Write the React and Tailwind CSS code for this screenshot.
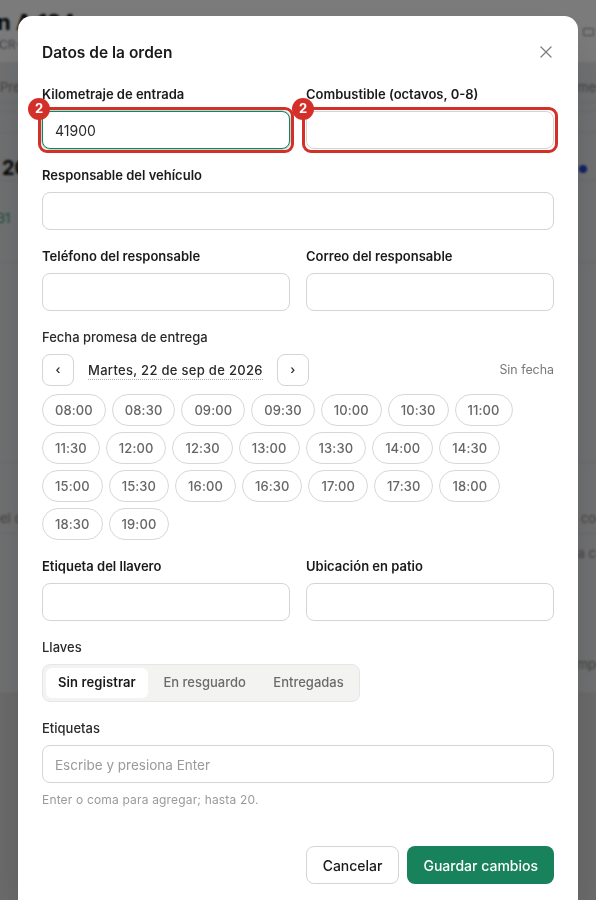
import React from 'react';
import { X } from 'lucide-react';

const slots = [
  '08:00', '08:30', '09:00', '09:30', '10:00', '10:30', '11:00',
  '11:30', '12:00', '12:30', '13:00', '13:30', '14:00', '14:30',
  '15:00', '15:30', '16:00', '16:30', '17:00', '17:30', '18:00',
  '18:30', '19:00',
];

const Field = ({ label, value, flagged, focused }) => (
  <div className="min-w-0">
    <label className="block h-5 mb-[7px] text-[13px] leading-5 font-semibold text-[#1a1a1a]">{label}</label>
    <div className="relative">
      <input
        readOnly
        value={value || ''}
        className={`block w-full h-[38px] px-[12px] pt-px rounded-lg border bg-white text-[14px] text-[#2a2a2a] outline-none ${
          focused ? 'border-[#17825c] ring-1 ring-[#17825c]/30' : 'border-[#d4d4d4]'
        }`}
      />
      {flagged && (
        <>
          <div className="absolute -inset-1 rounded-[9px] border-[3px] border-[#d3302a] pointer-events-none" />
          <div className="absolute -left-[14px] -top-[13px] w-[22px] h-[22px] rounded-full bg-[#d3302a] text-white text-[13px] font-bold flex items-center justify-center">
            2
          </div>
        </>
      )}
    </div>
  </div>
);

// page behind the dialog, only its edges show
const Page = () => (
  <div className="h-[900px] bg-[#d8d8d9] text-[13px] text-[#888] overflow-hidden">
    <div className="h-[694px] bg-[#e2e3e5]">
      <div className="h-[63px] bg-[#f6f7f9] border-b border-[#e2e2e4] flex justify-between">
        <div className="-ml-[3px] pt-[10px]">
          <div className="text-[22px] leading-[24px] font-bold text-[#111]">n A 124</div>
          <div className="mt-[3px] pl-[2px] text-[12px] leading-[16px]">CR-</div>
        </div>
        <div className="w-[11px] h-[8px] mt-[28px] mr-[2px] border border-[#888] rounded-[1px]" />
      </div>
      <div className="h-[40px] border-b border-[#d4d4d6] flex justify-between items-center pt-[10px]">
        <span>Pre</span>
        <span>me</span>
      </div>
      <div className="h-[9px] border-b border-[#d4d4d6]" />
      <div className="h-[21px] border-b border-[#d4d4d6]" />
      <div className="h-[48px] border-b border-[#d4d4d6] flex justify-between items-end">
        <span className="ml-[2px] -mb-[2px] text-[20px] leading-[28px] font-bold text-[#111]">20</span>
        <span className="w-2 h-2 mb-[7px] mr-[9px] rounded-full bg-[#2244cc]" />
      </div>
      <div className="h-[82px] border-b border-[#d4d4d6] pt-[29px] -ml-[3px] text-[#3f9a76] leading-4">31</div>
      <div className="h-[200px] border-b border-[#d4d4d6]" />
      <div className="h-[71px] border-b border-[#d4d4d6] flex justify-between pt-[47px] leading-4">
        <span>el c</span>
        <span>o co</span>
      </div>
      <div className="h-[160px] border-b border-[#cfcfd1] text-right pt-[11px] leading-4">
        <div>ta c</div>
        <div className="mt-[95px]">mp</div>
      </div>
    </div>
  </div>
);

const App = () => {
  return (
    <div className="relative h-[900px] overflow-hidden font-['Inter',sans-serif]">
      <Page />
      <div className="absolute inset-0 bg-black/50 backdrop-blur-[1px] flex justify-center items-start pt-4">
        <div className="w-[560px] rounded-t-[14px] bg-white px-6 pt-6 pb-6 shadow-2xl">
          <div className="flex items-center justify-between h-6 mb-5">
            <h2 className="pt-px text-[15.5px] font-semibold text-[#1a1a1a]">Datos de la orden</h2>
            <X size={20} strokeWidth={1.5} className="text-[#7d7d7d] -mr-[2px]" />
          </div>

          <div className="flex flex-col gap-4">
            <div className="grid grid-cols-2 gap-x-4">
              <Field label="Kilometraje de entrada" value="41900" flagged focused />
              <Field label="Combustible (octavos, 0-8)" flagged />
            </div>

            <Field label="Responsable del vehículo" />

            <div className="grid grid-cols-2 gap-x-4">
              <Field label="Teléfono del responsable" />
              <Field label="Correo del responsable" />
            </div>

            <div>
              <div className="h-5 mb-[7px] text-[13px] leading-5 font-medium text-[#2a2a2a]">Fecha promesa de entrega</div>
              <div className="flex items-center h-8 mb-2">
                <button className="w-8 h-8 rounded-lg border border-[#d4d4d4] text-[12px] font-semibold text-[#333]">‹</button>
                <span className="mx-[14px] pt-px text-[13px] font-medium tracking-[0.3px] text-[#2a2a2a] border-b border-dotted border-[#aaa] leading-[17px]">
                  Martes, 22 de sep de 2026
                </span>
                <button className="w-8 h-8 rounded-lg border border-[#d4d4d4] text-[12px] font-semibold text-[#333]">›</button>
                <span className="ml-auto pt-px text-[12.4px] text-[#777]">Sin fecha</span>
              </div>
              <div className="flex flex-wrap gap-[6px]">
                {slots.map((slot) => (
                  <button key={slot} className="h-8 px-3 pt-px rounded-2xl border border-[#d8d8d8] text-[13px] tracking-[0.1px] font-medium text-[#666]">
                    {slot}
                  </button>
                ))}
              </div>
            </div>

            <div className="grid grid-cols-2 gap-x-4">
              <Field label="Etiqueta del llavero" />
              <Field label="Ubicación en patio" />
            </div>

            <div>
              <div className="h-5 mb-[7px] text-[13px] leading-5 font-medium text-[#2a2a2a]">Llaves</div>
              <div className="inline-flex h-[38px] p-[3px] rounded-lg border border-[#e6e6e6] bg-[#f3f3f2] text-[13px] font-medium">
                <span className="flex items-center px-3 rounded-md bg-white font-semibold tracking-[0.1px] text-[#1a1a1a]">Sin registrar</span>
                <span className="flex items-center px-[15.5px] text-[#6b6b6b]">En resguardo</span>
                <span className="flex items-center px-3 text-[#6b6b6b]">Entregadas</span>
              </div>
            </div>

            <div>
              <div className="h-5 mb-[7px] text-[13px] leading-5 font-medium text-[#2a2a2a]">Etiquetas</div>
              <input
                readOnly
                placeholder="Escribe y presiona Enter"
                className="block w-full h-[38px] px-3 pt-px rounded-lg border border-[#d4d4d4] text-[13.5px] outline-none placeholder:text-[#9a9a9a]"
              />
              <p className="mt-[9px] text-[12px] leading-4 tracking-[0.17px] text-[#9a9a9a]">Enter o coma para agregar; hasta 20.</p>
            </div>
          </div>

          <div className="flex justify-end gap-2 mt-[38px]">
            <button className="h-[38px] px-4 rounded-lg border border-[#d4d4d4] bg-white text-[14px] font-medium text-[#1a1a1a]">
              Cancelar
            </button>
            <button className="h-[38px] px-4 rounded-lg bg-[#17825c] text-[14px] font-medium text-white">
              Guardar cambios
            </button>
          </div>
        </div>
      </div>
    </div>
  );
};

export default App;
